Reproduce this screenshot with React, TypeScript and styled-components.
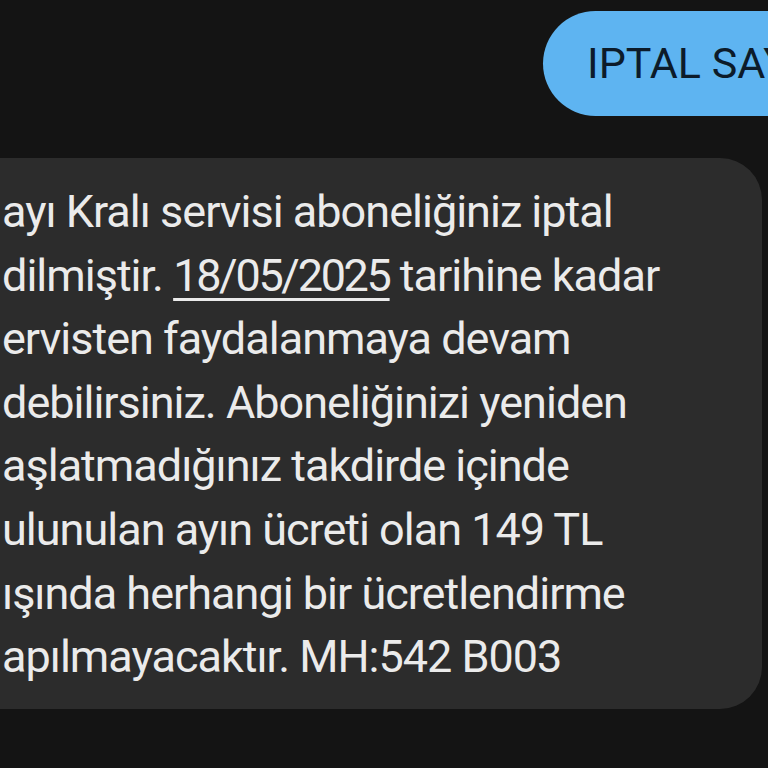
import React from "react";
import styled, { createGlobalStyle } from "styled-components";

const Global = createGlobalStyle`
  html, body {
    margin: 0;
    padding: 0;
    background: #141414;
    width: 768px;
    height: 768px;
    overflow: hidden;
  }
`;

const Screen = styled.div`
  width: 768px;
  height: 768px;
  overflow: hidden;
  background: #141414;
  display: flex;
  flex-direction: column;
  font-family: Roboto, "Noto Sans", sans-serif;
`;

const OutgoingRow = styled.div`
  display: flex;
  padding-top: 11px;
  padding-left: 543px;
`;

const OutgoingBubble = styled.div`
  flex-shrink: 0;
  height: 105px;
  box-sizing: border-box;
  border-radius: 52.5px;
  background: #5eb4f1;
  color: #0c1b2a;
  font-size: 43px;
  line-height: 105px;
  padding: 0 60px 0 44px;
  white-space: nowrap;
`;

const IncomingRow = styled.div`
  display: flex;
  margin-top: 42px;
`;

const IncomingBubble = styled.div`
  flex-shrink: 0;
  margin-left: -40px;
  width: 802px;
  box-sizing: border-box;
  background: #2c2c2c;
  border-radius: 42px;
  padding: 22px 0 20px 42px;
  color: #ebebeb;
  font-size: 45px;
  letter-spacing: -1px;
  line-height: 63.6px;
`;

const Line = styled.div`
  white-space: nowrap;
`;

const DateLink = styled.span`
  letter-spacing: -2.3px;
  text-decoration: underline;
  text-decoration-thickness: 3px;
  text-underline-offset: 7px;
`;

export default function App() {
  return (
    <>
      <Global />
      <Screen>
        <OutgoingRow>
          <OutgoingBubble>IPTAL SAY</OutgoingBubble>
        </OutgoingRow>
        <IncomingRow>
          <IncomingBubble>
            <Line>ayı Kralı servisi aboneliğiniz iptal</Line>
            <Line>
              dilmiştir. <DateLink>18/05/2025</DateLink> tarihine kadar
            </Line>
            <Line>ervisten faydalanmaya devam</Line>
            <Line>debilirsiniz. Aboneliğinizi yeniden</Line>
            <Line>aşlatmadığınız takdirde içinde</Line>
            <Line>ulunulan ayın ücreti olan 149 TL</Line>
            <Line>ışında herhangi bir ücretlendirme</Line>
            <Line>apılmayacaktır. MH:542 B003</Line>
          </IncomingBubble>
        </IncomingRow>
      </Screen>
    </>
  );
}
